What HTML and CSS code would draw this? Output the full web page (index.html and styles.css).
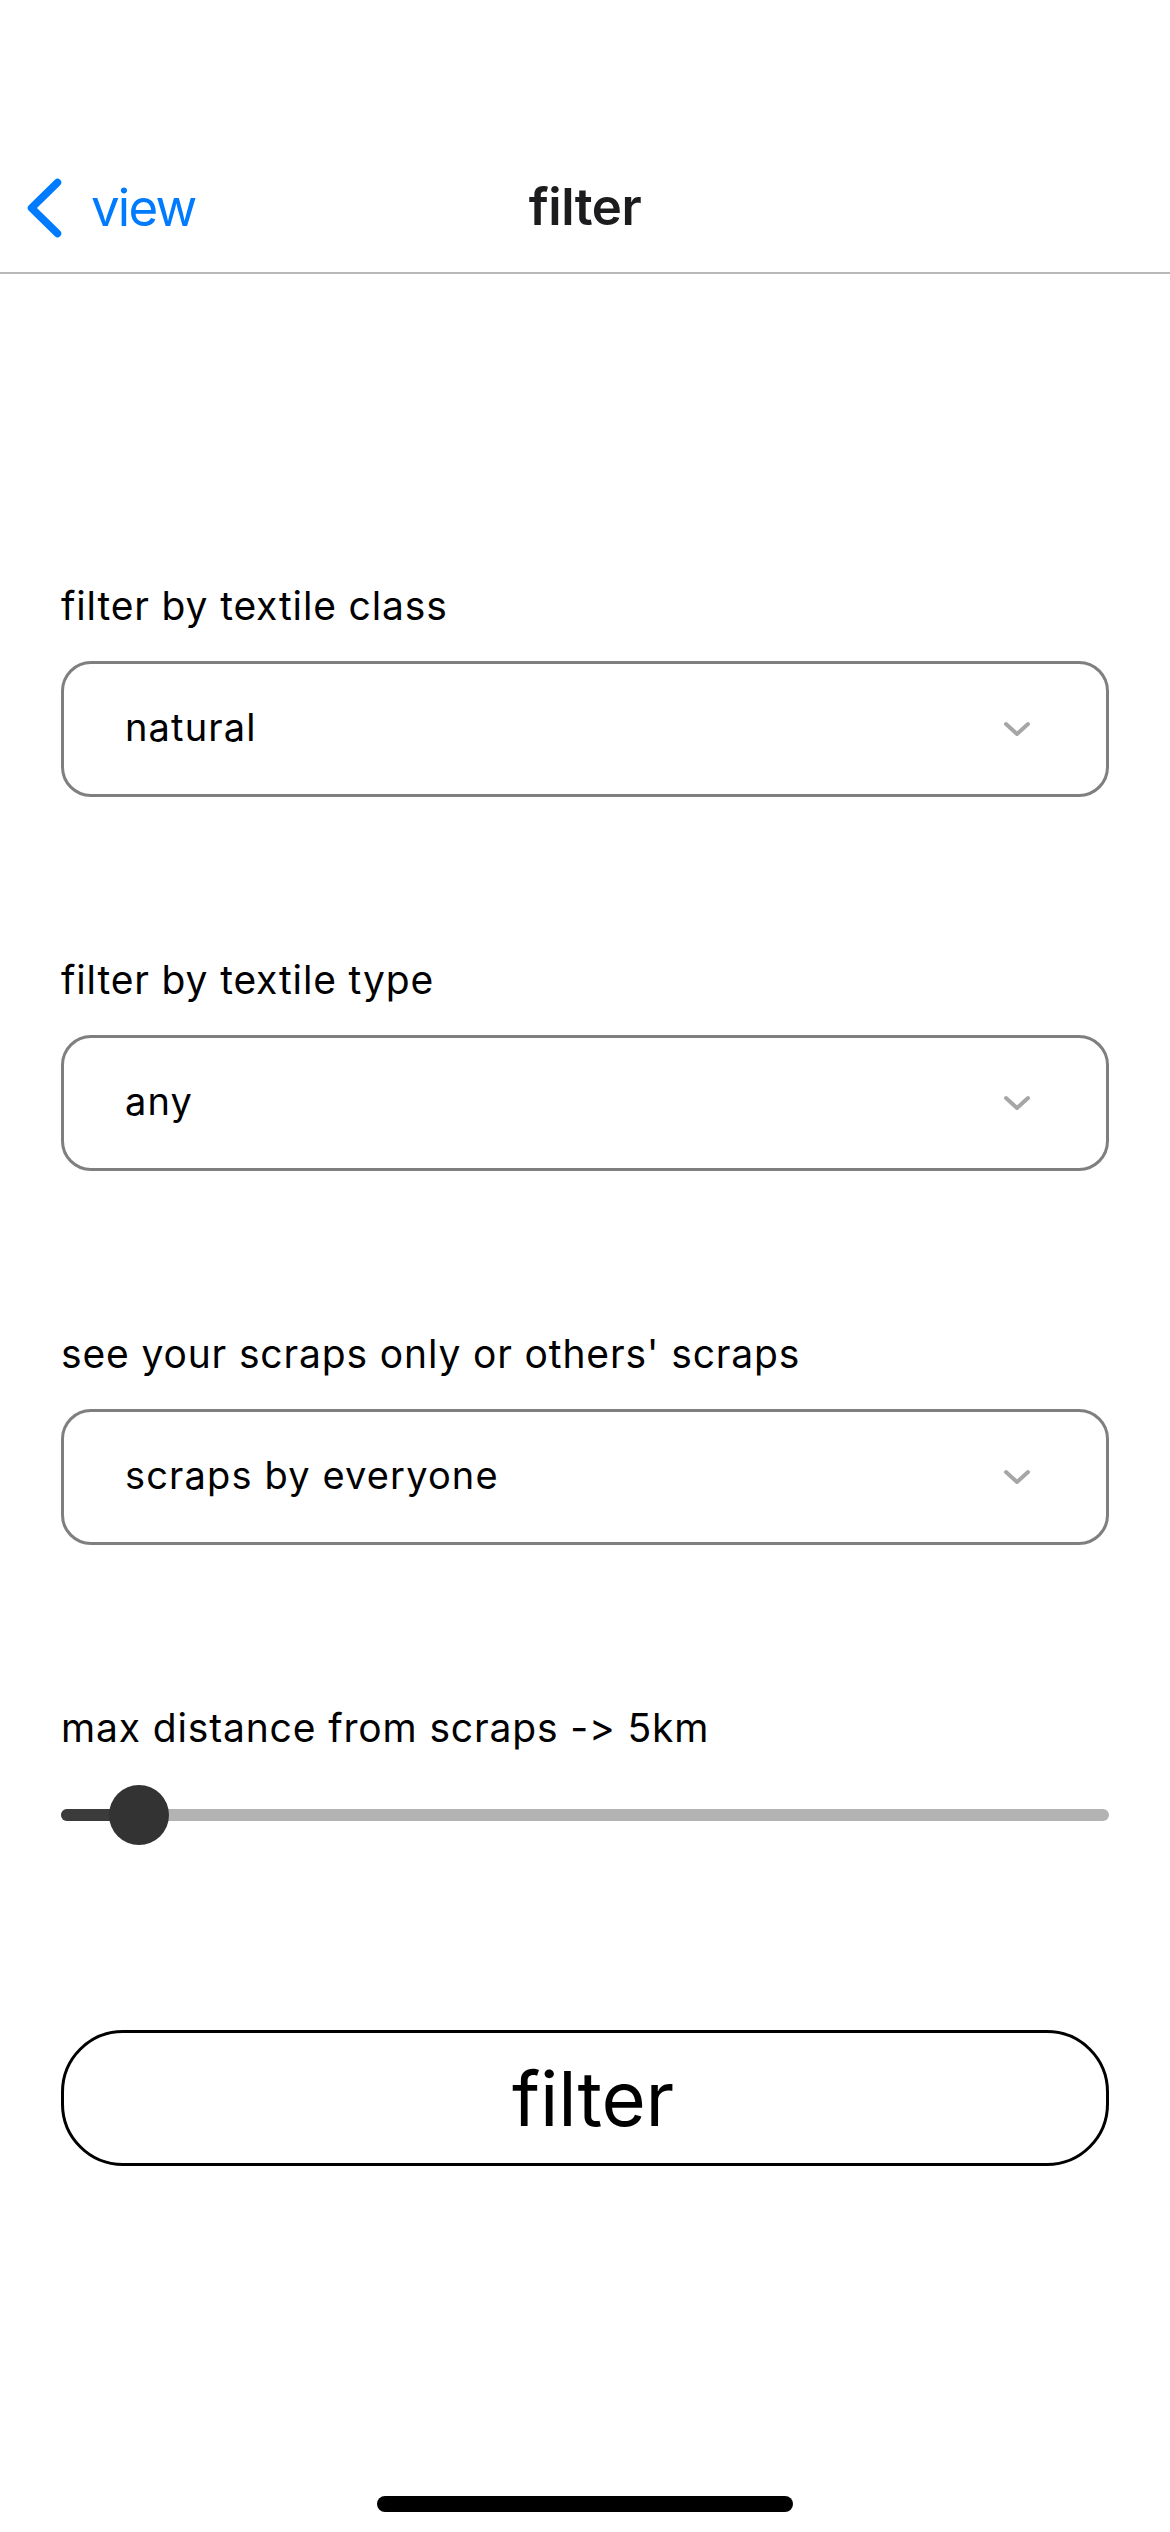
FILE: index.html
```html
<!DOCTYPE html>
<html lang="en">
<head>
<meta charset="utf-8">
<title>filter</title>
<link rel="stylesheet" href="styles.css">
</head>
<body>
<div class="screen">
  <header class="header">
    <div class="statusbar"></div>
    <nav class="navbar">
      <div class="back">
        <svg class="back-chevron" width="40" height="64" viewBox="0 0 40 64"><path d="M33.5 6.5 L7.5 32 L33.5 57.5" fill="none" stroke="#007aff" stroke-width="7.5" stroke-linecap="round" stroke-linejoin="round"/></svg>
        <span class="back-label">view</span>
      </div>
      <div class="title">filter</div>
      <div class="nav-spacer"></div>
    </nav>
  </header>

  <main class="content">
    <section class="field">
      <div class="label">filter by textile class</div>
      <div class="select">
        <span class="select-value">natural</span>
        <svg class="select-chevron" width="30" height="20" viewBox="0 0 30 20"><path d="M4 5 L15 15 L26 5" fill="none" stroke="#a6a6a6" stroke-width="4" stroke-linecap="round" stroke-linejoin="round"/></svg>
      </div>
    </section>

    <section class="field">
      <div class="label">filter by textile type</div>
      <div class="select">
        <span class="select-value">any</span>
        <svg class="select-chevron" width="30" height="20" viewBox="0 0 30 20"><path d="M4 5 L15 15 L26 5" fill="none" stroke="#a6a6a6" stroke-width="4" stroke-linecap="round" stroke-linejoin="round"/></svg>
      </div>
    </section>

    <section class="field">
      <div class="label">see your scraps only or others' scraps</div>
      <div class="select">
        <span class="select-value">scraps by everyone</span>
        <svg class="select-chevron" width="30" height="20" viewBox="0 0 30 20"><path d="M4 5 L15 15 L26 5" fill="none" stroke="#a6a6a6" stroke-width="4" stroke-linecap="round" stroke-linejoin="round"/></svg>
      </div>
    </section>

    <section class="field field-slider">
      <div class="label">max distance from scraps -&gt; 5km</div>
      <div class="slider">
        <div class="track">
          <div class="track-fill"></div>
          <div class="thumb"></div>
        </div>
      </div>
    </section>

    <button class="filter-button" type="button">filter</button>
  </main>

  <div class="home-area"><div class="home-indicator"></div></div>
</div>
</body>
</html>
```

FILE: styles.css
```css
* {
  box-sizing: border-box;
}

html, body {
  margin: 0;
  padding: 0;
  background: #ffffff;
}

body {
  font-family: Inter, "Liberation Sans", Roboto, sans-serif;
  color: #000000;
}

.screen {
  width: 1170px;
  min-height: 2532px;
  display: flex;
  flex-direction: column;
}

.header {
  border-bottom: 2px solid #b8b8b8;
}

.statusbar {
  height: 141px;
}

.navbar {
  height: 131px;
  display: grid;
  grid-template-columns: 1fr auto 1fr;
  align-items: center;
}

.back {
  display: flex;
  align-items: center;
  padding-left: 24px;
  padding-top: 2px;
  gap: 27px;
}

.back-chevron {
  display: block;
}

.back-label {
  font-size: 51px;
  color: #007aff;
  letter-spacing: -1.8px;
  line-height: 1;
}

.title {
  font-size: 51px;
  font-weight: 600;
  color: #1c1c1e;
  letter-spacing: -0.5px;
  line-height: 1;
  padding-top: 0;
}

.content {
  padding: 308px 61px 0 61px;
  display: flex;
  flex-direction: column;
}

.field {
  display: flex;
  flex-direction: column;
  margin-bottom: 159px;
}

.label {
  font-size: 39px;
  line-height: 47px;
  height: 47px;
  letter-spacing: 0.85px;
  margin-bottom: 32px;
  white-space: nowrap;
}

.select {
  height: 136px;
  border: 3px solid #7f7f7f;
  border-radius: 30px;
  display: flex;
  align-items: center;
  justify-content: space-between;
  padding: 0 74px 0 61px;
}

.select-value {
  font-size: 38px;
  letter-spacing: 1.15px;
  line-height: 1;
  padding-bottom: 4px;
}

.select-chevron {
  display: block;
}

.field-slider {
  margin-bottom: 0;
}

.field-slider .label {
  margin-bottom: 34px;
}

.slider {
  height: 60px;
  display: flex;
  align-items: center;
}

.track {
  position: relative;
  width: 100%;
  height: 12px;
  border-radius: 6px;
  background: #b3b3b3;
}

.track-fill {
  width: 80px;
  height: 12px;
  border-radius: 6px 0 0 6px;
  background: #3b3b3b;
}

.thumb {
  position: absolute;
  left: 48px;
  top: -24px;
  width: 60px;
  height: 60px;
  border-radius: 50%;
  background: #333333;
}

.filter-button {
  margin-top: 185px;
  height: 136px;
  width: 100%;
  border: 3px solid #000000;
  border-radius: 62px;
  background: #ffffff;
  font-family: Inter, "Liberation Sans", Roboto, sans-serif;
  font-size: 76px;
  color: #000000;
  padding: 0 0 0 16px;
  line-height: 1;
  letter-spacing: -0.2px;
}

.home-area {
  margin-top: auto;
  height: 60px;
  padding-bottom: 20px;
  display: flex;
  align-items: flex-end;
  justify-content: center;
}

.home-indicator {
  width: 416px;
  height: 16px;
  border-radius: 8px;
  background: #000000;
}
```
